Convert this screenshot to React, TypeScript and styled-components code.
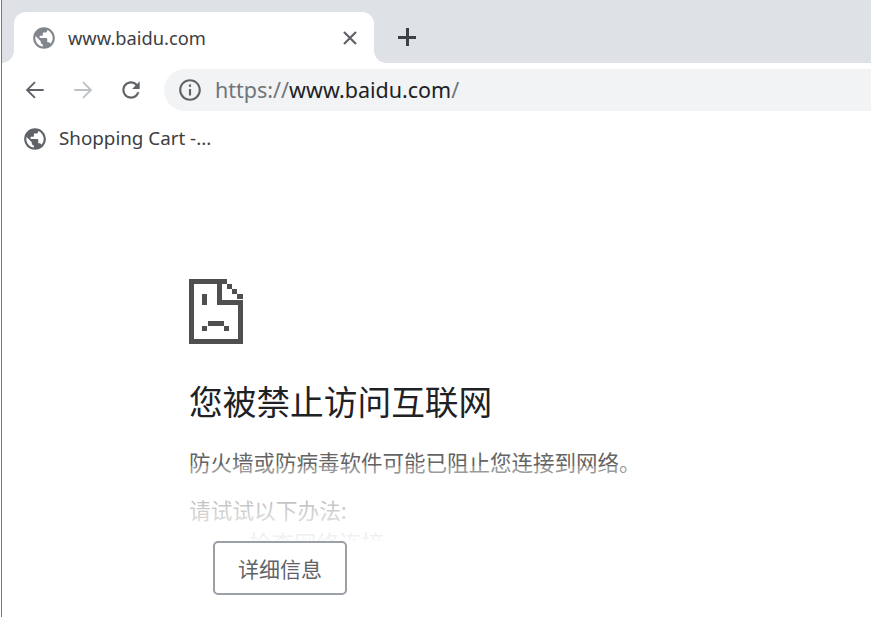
import React from 'react';
import styled, {createGlobalStyle} from 'styled-components';

const UI_FONT = `"Noto Sans", "Open Sans", "Noto Sans CJK SC", sans-serif`;
const CJK_FONT = `"Noto Sans CJK SC", "Noto Sans", sans-serif`;

const GlobalStyle = createGlobalStyle`
  html, body {
    margin: 0;
    height: 100%;
    background: #fff;
    overflow: hidden;
  }
  #root {
    height: 100%;
  }
`;

const Window = styled.div`
  width: 871px;
  height: 617px;
  box-sizing: border-box;
  margin-left: 1px;
  border-left: 1px solid #777;
  background: #fff;
  overflow: hidden;
`;

const TabStrip = styled.div`
  display: flex;
  align-items: flex-end;
  height: 63px;
  padding-left: 12px;
  background: #dee1e6;
`;

const Tab = styled.div`
  position: relative;
  display: flex;
  align-items: center;
  width: 360px;
  height: 51px;
  box-sizing: border-box;
  padding: 0 17px 0 17px;
  background: #fff;
  border-radius: 12px 12px 0 0;

  &::before,
  &::after {
    content: '';
    position: absolute;
    bottom: 0;
    width: 12px;
    height: 12px;
    background: radial-gradient(circle at var(--cx) 0, #dee1e6 11.5px, #fff 12px);
  }
  &::before {
    --cx: 0;
    left: -12px;
  }
  &::after {
    --cx: 100%;
    right: -12px;
  }
`;

const TabTitle = styled.span`
  flex: 1;
  margin-left: 11px;
  font: 18.3px ${UI_FONT};
  color: #3c4043;
`;

const TabIconSlot = styled.span<{$color: string}>`
  display: flex;
  color: ${p => p.$color};
`;

const NewTab = styled.span`
  display: flex;
  margin: 0 0 17px 24px;
  color: #3c4043;
`;

const Toolbar = styled.div`
  display: flex;
  align-items: center;
  height: 54px;
  padding-left: 20px;
`;

const NavButton = styled.span<{$disabled?: boolean}>`
  display: flex;
  width: 48px;
  color: ${p => (p.$disabled ? '#bdc1c6' : '#5f6368')};
`;

const Omnibox = styled.div`
  flex: 1;
  display: flex;
  align-items: center;
  height: 42px;
  margin: -1px 0 0 -2px;
  padding-left: 13px;
  background: #f1f3f4;
  border-radius: 21px 0 0 21px;
  color: #5f6368;
`;

const Url = styled.span`
  margin-left: 12px;
  font: 21.5px ${UI_FONT};
  color: #70757a;
  white-space: nowrap;
`;

const Host = styled.span`
  color: #202124;
`;

const BookmarkBar = styled.div`
  display: flex;
  align-items: center;
  height: 44px;
  padding-left: 20px;
`;

const BookmarkLabel = styled.span`
  margin: -2px 0 0 11px;
  font: 18.8px ${UI_FONT};
  color: #3c4043;
`;

const Main = styled.main`
  padding: 118px 0 0 187px;
`;

const Fade = styled.div`
  position: relative;
  height: 262px;
  overflow: hidden;

  &::after {
    content: '';
    position: absolute;
    left: 0;
    right: 0;
    bottom: 0;
    height: 75px;
    background: linear-gradient(rgba(255, 255, 255, 0.3), rgba(255, 255, 255, 0.95));
  }
`;

const SadTab = styled.svg`
  display: block;
`;

const Heading = styled.h1`
  margin: 34px 0 0;
  font: 400 33.7px/46px ${CJK_FONT};
  color: #202124;
`;

const Message = styled.p`
  margin: 23px 0 0;
  font: 21.5px/30px ${CJK_FONT};
  color: #646464;
`;

const SuggestTitle = styled.p`
  margin: 18px 0 0;
  font: 21.7px/30px ${CJK_FONT};
  color: #646464;
`;

const SuggestItem = styled.p`
  margin: 2px 0 0 60px;
  font: 22.5px/30px ${CJK_FONT};
  color: #646464;
`;

const DetailsButton = styled.button`
  display: block;
  width: 134px;
  height: 54px;
  margin-left: 24px;
  padding: 0;
  box-sizing: border-box;
  background: #fff;
  border: 2px solid #9aa0a6;
  border-radius: 5px;
  font: 21px ${CJK_FONT};
  color: #5f6368;
`;

const Globe = () => (
  <svg width="26" height="26" viewBox="0 0 24 24" fill="currentColor">
    <path d="M12 2C6.48 2 2 6.48 2 12s4.48 10 10 10 10-4.48 10-10S17.52 2 12 2zm-1 17.93c-3.95-.49-7-3.85-7-7.93 0-.62.08-1.21.21-1.79L9 15v1c0 1.1.9 2 2 2v1.93zm6.9-2.54c-.26-.81-1-1.39-1.9-1.39h-1v-3c0-.55-.45-1-1-1H8v-2h2c.55 0 1-.45 1-1V7h2c1.1 0 2-.9 2-2v-.41c2.93 1.19 5 4.06 5 7.41 0 2.08-.8 3.97-2.1 5.39z" />
  </svg>
);

const Arrow = ({flip}: {flip?: boolean}) => (
  <svg width="26" height="26" viewBox="0 0 24 24" fill="currentColor" transform={flip ? 'scale(-1 1)' : undefined}>
    <path d="M20 11H6.9l5.7-5.7L11.4 4.1 3.5 12l7.9 7.9 1.2-1.2L6.9 13H20z" />
  </svg>
);

const Reload = () => (
  <svg width="26" height="26" viewBox="0 0 24 24" fill="currentColor">
    <path d="M17.65 6.35C16.2 4.9 14.21 4 12 4c-4.42 0-7.99 3.58-7.99 8s3.57 8 7.99 8c3.73 0 6.84-2.55 7.73-6h-2.08c-.82 2.33-3.04 4-5.65 4-3.31 0-6-2.69-6-6s2.69-6 6-6c1.66 0 3.14.69 4.22 1.78L13 11h7V4l-2.35 2.35z" />
  </svg>
);

const Info = () => (
  <svg width="26" height="26" viewBox="0 0 24 24" fill="currentColor">
    <path d="M11 7h2v2h-2zm0 4h2v6h-2zm1-9C6.48 2 2 6.48 2 12s4.48 10 10 10 10-4.48 10-10S17.52 2 12 2zm0 18c-4.41 0-8-3.59-8-8s3.59-8 8-8 8 3.59 8 8-3.59 8-8 8z" />
  </svg>
);

const Close = () => (
  <svg width="14" height="14" viewBox="0 0 14 14" stroke="#5f6368" strokeWidth="2.2" fill="none">
    <path d="M1 1l12 12M13 1L1 13" />
  </svg>
);

const Plus = () => (
  <svg width="18" height="18" viewBox="0 0 18 18" fill="currentColor" shapeRendering="crispEdges">
    <path d="M7.5 0h3v7.5H18v3h-7.5V18h-3v-7.5H0v-3h7.5z" />
  </svg>
);

const SadTabIcon = () => (
  <SadTab width="54" height="65" viewBox="0 0 54 65" fill="#4f4f4f" shapeRendering="crispEdges">
    <path d="M0 0h38v5H33v16h21v44H0zM5 5v55h44V26H28V5z" />
    <path d="M38 5h5v5h-5zM43 10h5v5h-5zM48 15h6v5h-6z" />
    <path d="M13 15h5v11h-5zM19 42h16v5H19zM13 47h5v5h-5zM35 47h5v5h-5z" />
  </SadTab>
);

export default function App() {
  return (
    <>
      <GlobalStyle />
      <Window>
        <TabStrip>
          <Tab>
            <TabIconSlot $color="#80868b">
              <Globe />
            </TabIconSlot>
            <TabTitle>www.baidu.com</TabTitle>
            <Close />
          </Tab>
          <NewTab>
            <Plus />
          </NewTab>
        </TabStrip>
        <Toolbar>
          <NavButton>
            <Arrow />
          </NavButton>
          <NavButton $disabled>
            <Arrow flip />
          </NavButton>
          <NavButton>
            <Reload />
          </NavButton>
          <Omnibox>
            <Info />
            <Url>
              https://<Host>www.baidu.com</Host>/
            </Url>
          </Omnibox>
        </Toolbar>
        <BookmarkBar>
          <TabIconSlot $color="#5f6368">
            <Globe />
          </TabIconSlot>
          <BookmarkLabel>Shopping Cart -...</BookmarkLabel>
        </BookmarkBar>
        <Main>
          <Fade>
            <SadTabIcon />
            <Heading>您被禁止访问互联网</Heading>
            <Message>防火墙或防病毒软件可能已阻止您连接到网络。</Message>
            <SuggestTitle>请试试以下办法:</SuggestTitle>
            <SuggestItem>检查网络连接</SuggestItem>
          </Fade>
          <DetailsButton>详细信息</DetailsButton>
        </Main>
      </Window>
    </>
  );
}
